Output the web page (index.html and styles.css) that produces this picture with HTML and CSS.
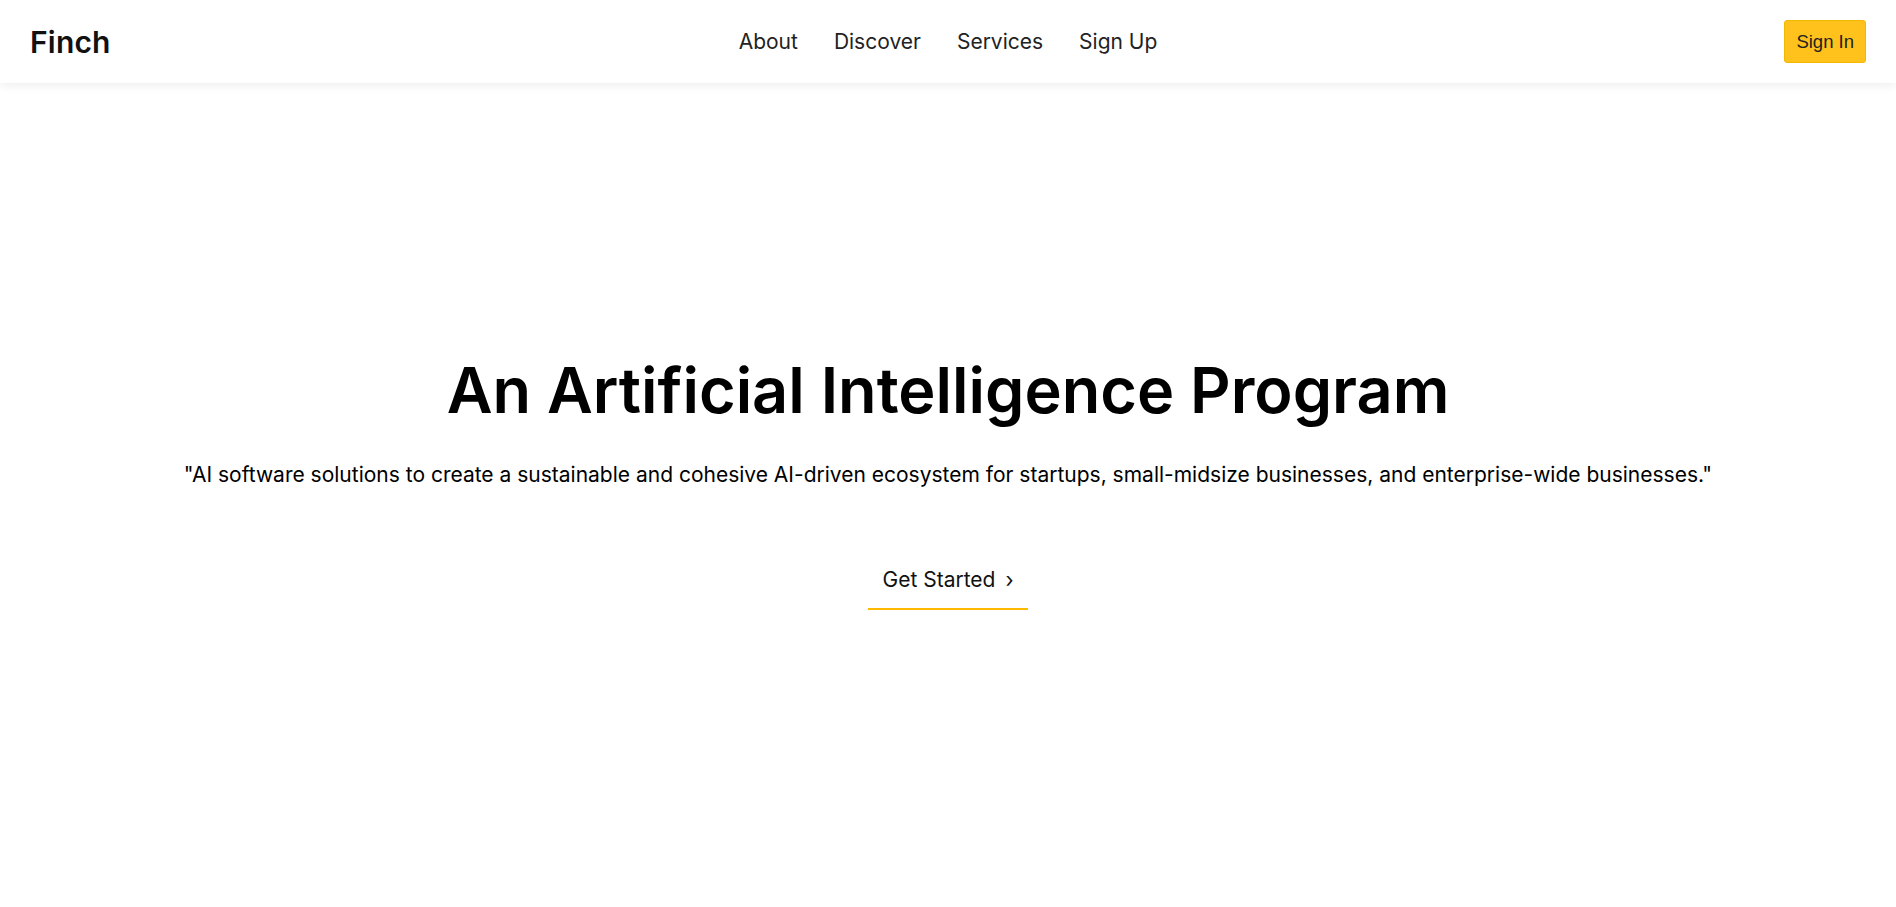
FILE: index.html
```html
<!DOCTYPE html>
<html lang="en">
<head>
    <meta charset="UTF-8">
    <meta name="viewport" content="width=device-width, initial-scale=1.0">
    <title>Finch</title>
    <link rel="stylesheet" href="styles.css">
</head>
<body>
    <header class="navbar">
        <a class="brand" href="#">Finch</a>
        <nav class="nav-links">
            <a href="#">About</a>
            <a href="#">Discover</a>
            <a href="#">Services</a>
            <a href="#">Sign Up</a>
        </nav>
        <div class="nav-actions">
            <button class="btn-signin">Sign In</button>
        </div>
    </header>

    <main class="hero">
        <h1 class="hero-title">An Artificial Intelligence Program</h1>
        <p class="hero-text">"AI software solutions to create a sustainable and cohesive AI-driven ecosystem for startups, small-midsize businesses, and enterprise-wide businesses."</p>
        <a class="hero-link" href="#">Get Started <span class="chevron">&rsaquo;</span></a>
    </main>
</body>
</html>
```

FILE: styles.css
```css
* {
    box-sizing: border-box;
}

body {
    margin: 0;
    font-family: 'Inter', 'Open Sans', sans-serif;
    background: #fff;
    color: #000;
}

a {
    text-decoration: none;
    color: inherit;
}

.navbar {
    height: 83px;
    display: grid;
    grid-template-columns: 1fr auto 1fr;
    align-items: center;
    padding: 0 30px;
    background: #fff;
    box-shadow: 0 2px 10px rgba(0, 0, 0, 0.08);
    position: relative;
}

.brand {
    font-size: 30px;
    font-weight: 600;
    color: #111;
    letter-spacing: 0.2px;
}

.nav-links {
    display: flex;
    gap: 36px;
    font-size: 21px;
    color: #222;
}

.nav-actions {
    display: flex;
    justify-content: flex-end;
}

.btn-signin {
    background: #ffc21c;
    border: 1px solid #f5b800;
    border-radius: 3px;
    padding: 10px 11px;
    font-family: 'Liberation Sans', Arial, sans-serif;
    font-size: 18.5px;
    line-height: 21px;
    color: #222;
    cursor: pointer;
}

.hero {
    display: flex;
    flex-direction: column;
    align-items: center;
    padding-top: 269px;
    text-align: center;
}

.hero-title {
    margin: 0;
    font-size: 63px;
    font-weight: 600;
}

.hero-text {
    margin: 34px 0 0;
    font-size: 21px;
    font-weight: 400;
}

.hero-link {
    margin-top: 80px;
    padding: 0 15px 16px;
    font-size: 21px;
    border-bottom: 2px solid #ffb800;
    color: #111;
}

.chevron {
    margin-left: 4px;
}
```
